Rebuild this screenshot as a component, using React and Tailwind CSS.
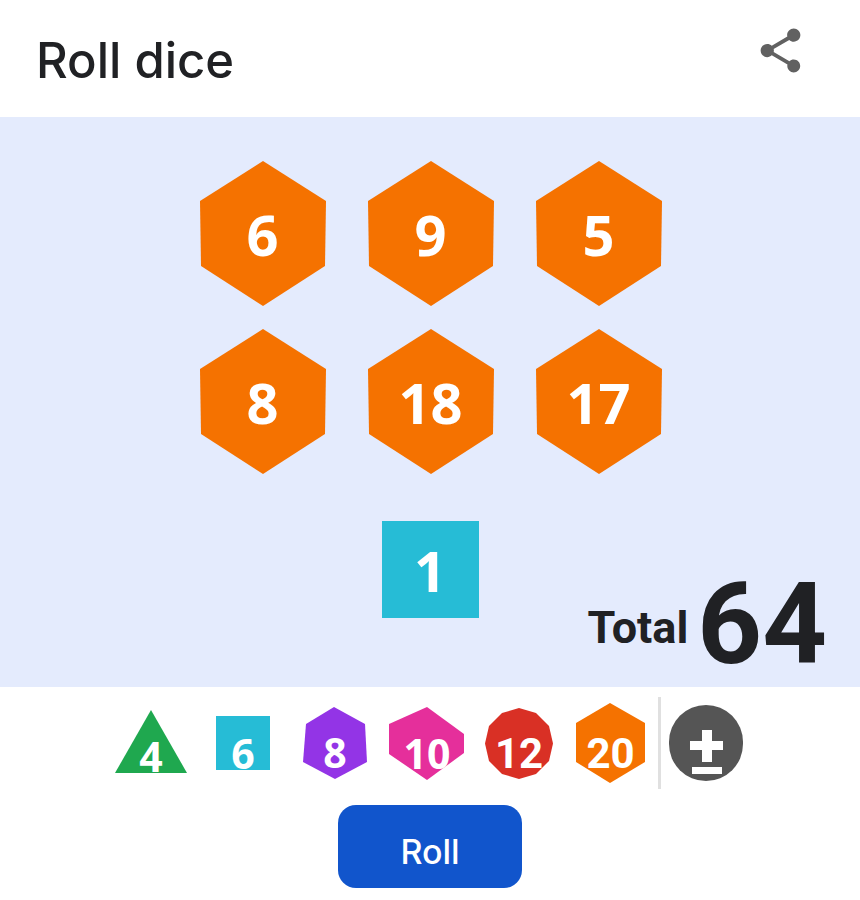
const HEX = '63,0 126,40 125,105 63,145 1,105 0,40'

const tray = [
  { label: '4', w: 72, h: 63, fill: '#1fa84f', points: '36,0 72,63 0,63', cls: '-mt-[4px]', text: "pt-[30px] font-['Open_Sans',sans-serif] text-[41px] font-bold" },
  { label: '6', w: 54, h: 54, fill: '#26bcd6', points: '0,0 54,0 54,54 0,54', cls: 'ml-[29px]', text: "pt-[20px] font-['Open_Sans',sans-serif] text-[41px] font-bold" },
  { label: '8', w: 64, h: 72, fill: '#9334e6', points: '31,0 62,17 64,55 32,72 0,55 3,17', cls: 'ml-[33px]', text: "pt-[18px] font-['Open_Sans',sans-serif] text-[41px] font-bold" },
  { label: '10', w: 76, h: 73, fill: '#e52f9b', points: '38,0 75,27 75,46 38,73 0,47 0,17', cls: 'ml-[22px]', text: "pt-[20px] font-['Open_Sans',sans-serif] text-[41px] font-bold" },
  { label: '12', w: 68, h: 71, fill: '#d93025', points: '34,0 51,5 64,18 68,35.5 64,53 51,66 34,71 17,66 4,53 0,35.5 4,18 17,5', cls: 'ml-[20px]', text: 'pt-[22px] text-[42px] font-bold' },
  { label: '20', w: 69, h: 80, fill: '#f57200', points: '34,0 69,20 69,59 34,80 0,59 0,20', cls: 'ml-[23px]', text: 'pt-[22px] text-[42px] font-bold' },
]

function Die({ value, w, h, fill, points, text }) {
  return (
    <div className="grid shrink-0 place-items-center font-['Roboto',sans-serif] text-white">
      <svg className="col-start-1 row-start-1" width={w} height={h} viewBox={`0 0 ${w} ${h}`}>
        <polygon points={points} fill={fill} />
      </svg>
      <span className={`col-start-1 row-start-1 leading-none ${text}`}>{value}</span>
    </div>
  )
}

function HexDie({ value }) {
  return <Die value={value} w={126} h={145} fill="#f57200" points={HEX} text="font-['Open_Sans',sans-serif] text-[56px] font-bold" />
}

export default function App() {
  return (
    <div className="h-[900px] w-[860px] bg-white font-['Roboto',sans-serif] text-[#202124]">
      <header className="flex h-[117px] items-center justify-between pl-[36px] pr-[53px]">
        <h1 className="pt-[4px] font-['Inter',sans-serif] text-[49px] font-medium leading-none">Roll dice</h1>
        <svg className="-mt-[16px]" width="53" height="53" viewBox="0 0 24 24" fill="#616161">
          <path d="M18 16.08c-.76 0-1.44.3-1.96.77L8.91 12.7c.05-.23.09-.46.09-.7s-.04-.47-.09-.7l7.05-4.11c.54.5 1.25.81 2.04.81 1.66 0 3-1.34 3-3s-1.34-3-3-3-3 1.34-3 3c0 .24.04.47.09.7L8.04 9.81C7.5 9.31 6.79 9 6 9c-1.66 0-3 1.34-3 3s1.34 3 3 3c.79 0 1.5-.31 2.04-.81l7.12 4.16c-.05.21-.08.43-.08.65 0 1.61 1.31 2.92 2.92 2.92 1.61 0 2.92-1.31 2.92-2.92s-1.31-2.92-2.92-2.92z" />
        </svg>
      </header>

      <section className="flex h-[570px] flex-col bg-[#e4ebfd] pt-[44px]">
        <div className="grid grid-cols-[126px_126px_126px] justify-center gap-x-[42px] gap-y-[23px] pl-[1px]">
          {['6', '9', '5', '8', '18', '17'].map((v, i) => (
            <HexDie key={i} value={v} />
          ))}
        </div>
        <div className="mt-[47px] grid flex-1 grid-cols-[1fr_97px_1fr] pb-[12px]">
          <div className="col-start-2 flex h-[97px] items-center justify-center bg-[#26bcd6] font-['Open_Sans',sans-serif] text-[56px] font-bold leading-none text-white">
            1
          </div>
          <div className="flex items-end justify-end self-end pr-[33px]">
            <span className="mb-[25px] mr-[9px] text-[45px] font-bold leading-none">Total</span>
            <span className="text-[113px] font-bold leading-[100px]">64</span>
          </div>
        </div>
      </section>

      <div className="flex h-[112px] items-center pl-[115px]">
        {tray.map((d) => (
          <div key={d.label} className={d.cls}>
            <Die value={d.label} w={d.w} h={d.h} fill={d.fill} points={d.points} text={d.text} />
          </div>
        ))}
        <div className="ml-[13px] h-[92px] w-[3px] bg-[#e0e0e0]" />
        <div className="ml-[8px] flex h-[76px] w-[74px] items-center justify-center rounded-full bg-[#555555]">
          <svg width="74" height="76" viewBox="0 0 74 76" fill="#ffffff">
            <path d="M33 25h10v11h11v9H43v12H33V45H21v-9h12z" />
            <rect x="23" y="62" width="30" height="7" />
          </svg>
        </div>
      </div>

      <div className="mt-[6px] flex justify-center">
        <button className="h-[83px] w-[184px] rounded-[18px] bg-[#1155cc] pt-[10px] font-['Inter',sans-serif] text-[34px] font-medium text-white">
          Roll
        </button>
      </div>
    </div>
  )
}
